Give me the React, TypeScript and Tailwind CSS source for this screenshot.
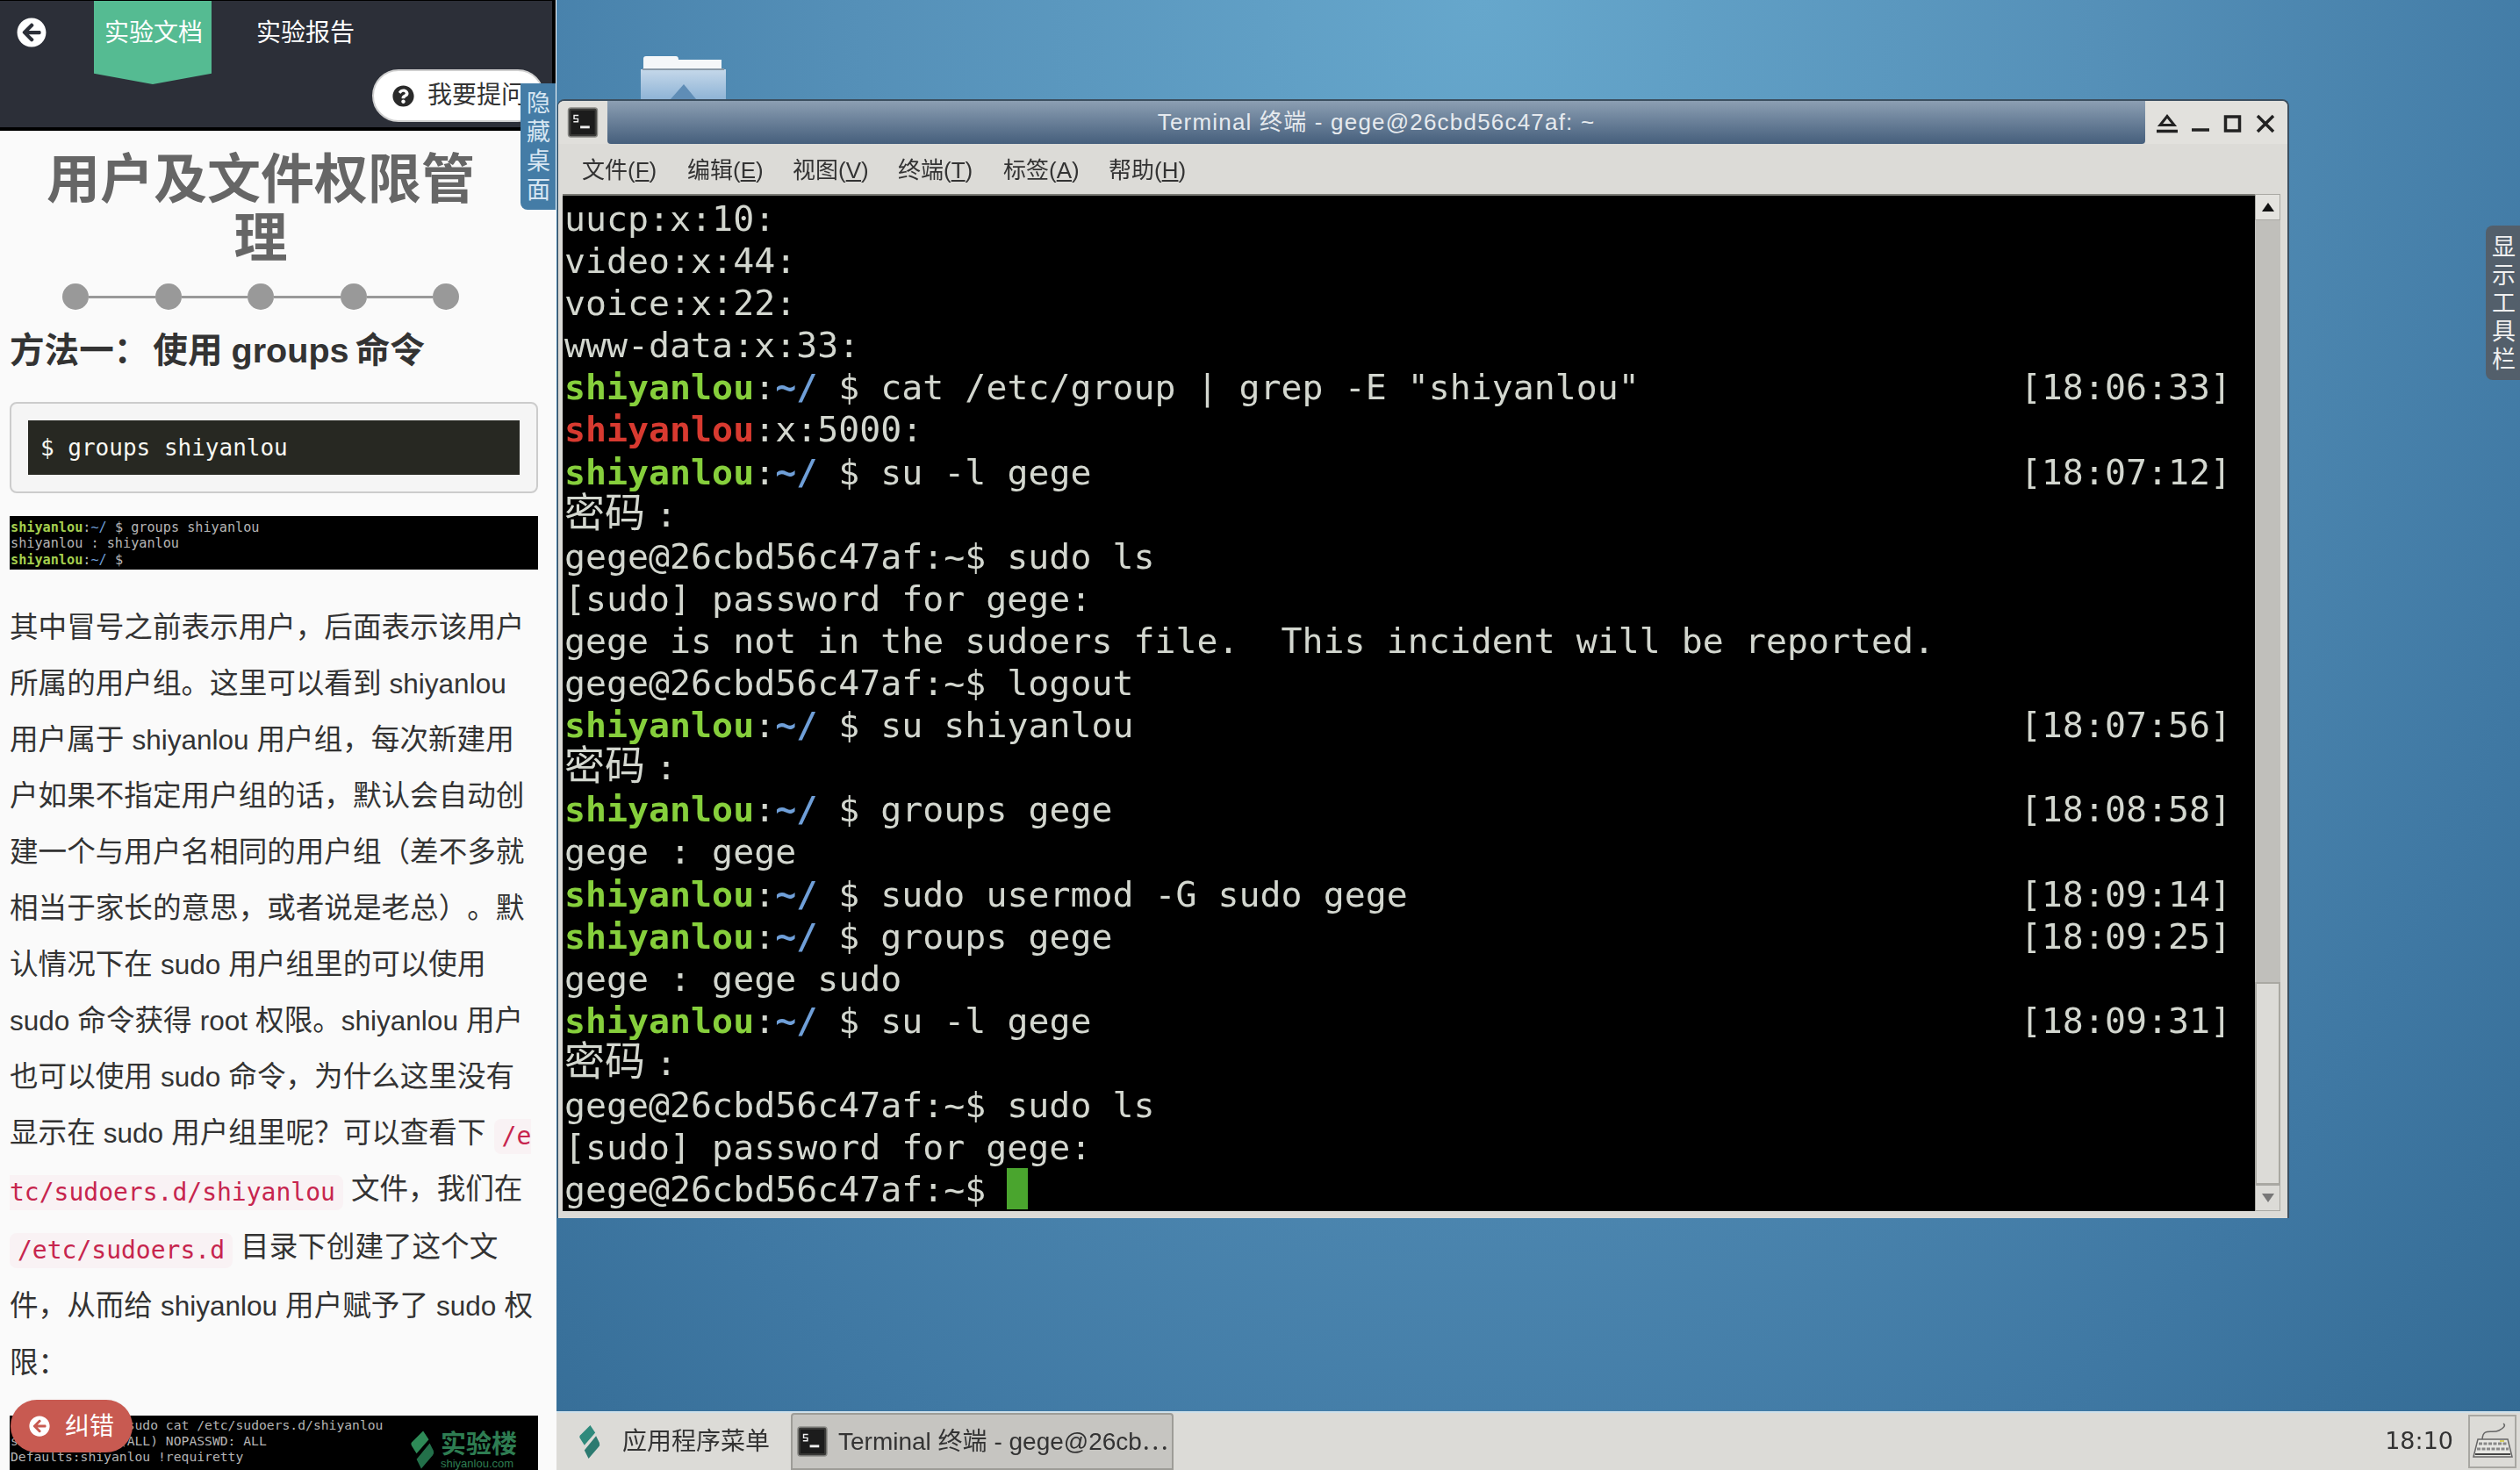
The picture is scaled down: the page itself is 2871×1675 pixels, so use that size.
import React from "react";
import { FaArrowCircleLeft, FaQuestionCircle } from "react-icons/fa";

const G = ({ children }: { children: React.ReactNode }) => <span className="font-bold text-[#86cf3c]">{children}</span>;

const Prompt = ({ cmd }: { cmd: string }) => (
  <>
    <G>shiyanlou</G>:<span className="font-bold text-[#6f9fd8]">~/</span> $ {cmd}
  </>
);

const Pw = () => (
  <>
    <span className="text-[46px] leading-[0]">密码</span>
    <span className="inline-block w-[48px] text-center leading-[0]">:</span>
  </>
);

const lines: { c: React.ReactNode; t?: string }[] = [
  { c: "uucp:x:10:" },
  { c: "video:x:44:" },
  { c: "voice:x:22:" },
  { c: "www-data:x:33:" },
  { c: <Prompt cmd={'cat /etc/group | grep -E "shiyanlou"'} />, t: "[18:06:33]" },
  { c: <><span className="font-bold text-[#d83a30]">shiyanlou</span>:x:5000:</> },
  { c: <Prompt cmd="su -l gege" />, t: "[18:07:12]" },
  { c: <Pw /> },
  { c: "gege@26cbd56c47af:~$ sudo ls" },
  { c: "[sudo] password for gege:" },
  { c: "gege is not in the sudoers file.  This incident will be reported." },
  { c: "gege@26cbd56c47af:~$ logout" },
  { c: <Prompt cmd="su shiyanlou" />, t: "[18:07:56]" },
  { c: <Pw /> },
  { c: <Prompt cmd="groups gege" />, t: "[18:08:58]" },
  { c: "gege : gege" },
  { c: <Prompt cmd="sudo usermod -G sudo gege" />, t: "[18:09:14]" },
  { c: <Prompt cmd="groups gege" />, t: "[18:09:25]" },
  { c: "gege : gege sudo" },
  { c: <Prompt cmd="su -l gege" />, t: "[18:09:31]" },
  { c: <Pw /> },
  { c: "gege@26cbd56c47af:~$ sudo ls" },
  { c: "[sudo] password for gege:" },
  {
    c: (
      <>
        gege@26cbd56c47af:~$ <span className="inline-block h-[47px] w-[24px] bg-[#4aa52e] align-top" />
      </>
    ),
  },
];

const En = ({ children }: { children: React.ReactNode }) => <span className="text-[31.500px]">{children}</span>;

const Code = ({ children, extra }: { children: React.ReactNode; extra?: string }) => (
  <code className={"inline-block h-[40px] bg-[#f9f2f4] font-['DejaVu_Sans_Mono',monospace] text-[28px] leading-[40px] text-[#c7254e] " + (extra || "")}>
    {children}
  </code>
);

const TermIcon = ({ className }: { className: string }) => (
  <svg viewBox="0 0 36 36" className={className}>
    <rect x="1" y="1" width="34" height="34" rx="3" fill="#3a3a38" stroke="#8a8a86" strokeWidth="1.5" />
    <rect x="4" y="4" width="28" height="28" fill="#1c1c1c" />
    <path d="M7 9h6v1.5H8.500V13H13v5H7v-1.500h4.500V14.500H7z" fill="#eeeeee" />
    <rect x="15" y="22" width="11" height="3" fill="#eeeeee" />
  </svg>
);

const Logo = ({ className, a, b }: { className: string; a: string; b: string }) => (
  <svg viewBox="0 0 28 40" className={className}>
    <path d="M15 0 L21 9 L8 24 L3 16 Q1 13 4 11 Z" fill={a} />
    <path d="M22 13 L26 21 Q27 24 25 26 L13 40 L8 30 Z" fill={b} />
  </svg>
);

const ShotLine = ({ children }: { children: React.ReactNode }) => <div className="h-[18.300px] whitespace-pre">{children}</div>;
const SG = ({ children }: { children: React.ReactNode }) => <span className="font-bold text-[#a5cf4e]">{children}</span>;

export default function App() {
  const cn = "font-['Liberation_Sans','Noto_Sans_CJK_SC',sans-serif]";
  return (
    <div className={"flex h-[1675px] w-[2871px] overflow-hidden " + cn}>
      {/* Course sidebar */}
      <aside className="relative h-full w-[634px] shrink-0 overflow-hidden bg-[#fafafa]">
        <header className="flex h-[149px] w-[633px] items-start overflow-hidden border-t-[1px] border-r-[4px] border-b-[4px] border-black bg-[#2c2f38]">
          <FaArrowCircleLeft className="mt-[19px] ml-[19px] h-[34px] w-[34px] shrink-0 text-white" />
          <div className="ml-[54px] h-[95px] w-[134px] shrink-0 bg-[#55bb92] pt-[17px] pl-[2px] text-center text-[28px] leading-[40px] text-white [clip-path:polygon(0_0,100%_0,100%_87%,50%_100%,0_87%)]">
            实验文档
          </div>
          <div className="ml-[51px] shrink-0 pt-[17px] text-[28px] leading-[40px] whitespace-nowrap text-white">实验报告</div>
          <div className="mt-[78px] ml-[20px] flex h-[60px] w-[196px] shrink-0 items-center overflow-hidden rounded-full border-2 border-[#cfcfcf] bg-white pl-[21px]">
            <FaQuestionCircle className="h-[25px] w-[25px] shrink-0 text-[#2a2a2a]" />
            <span className="ml-[15px] whitespace-nowrap text-[28px] text-[#333]">我要提问</span>
          </div>
        </header>

        <div className="absolute top-[95px] left-[593px] flex h-[144px] w-[40px] flex-col items-center rounded-bl-lg bg-[#447ca6] pt-[7px] pl-[1px] text-[27px] leading-[33px] text-[#d7e6f2]">
          <span>隐</span>
          <span>藏</span>
          <span>桌</span>
          <span>面</span>
        </div>

        <div className="px-[11px]">
          <h1 className="mt-[23px] w-[572px] text-center text-[61px] leading-[67px] font-bold text-[#666]">
            用户及文件权限管
            <br />理
          </h1>
          <div className="mt-[17px] ml-[60px] flex h-[30px] w-[452px] items-center">
            <i className="h-[30px] w-[30px] rounded-full bg-[#999]" />
            <i className="h-[3px] flex-1 bg-[#999]" />
            <i className="h-[30px] w-[30px] rounded-full bg-[#999]" />
            <i className="h-[3px] flex-1 bg-[#999]" />
            <i className="h-[30px] w-[30px] rounded-full bg-[#999]" />
            <i className="h-[3px] flex-1 bg-[#999]" />
            <i className="h-[30px] w-[30px] rounded-full bg-[#999]" />
            <i className="h-[3px] flex-1 bg-[#999]" />
            <i className="h-[30px] w-[30px] rounded-full bg-[#999]" />
          </div>
          <h2 className="mt-[21px] h-[50px] text-[39.600px] leading-[50px] font-bold whitespace-nowrap text-[#333]">
            方法一：<span className="ml-[5px]">使用</span> <span className="-ml-[1px]">groups</span> <span className="-ml-[4px]">命令</span>
          </h2>

          <div className="mt-[34px] h-[104px] w-[602px] rounded-lg border-2 border-[#cccccc] bg-[#f5f5f5] px-[19px] py-[19px]">
            <div className="h-[62px] bg-[#272822] pl-[14px] font-['DejaVu_Sans_Mono',monospace] text-[26px] leading-[62px] text-[#f8f8f2]">$ groups shiyanlou</div>
          </div>

          <div className="mt-[26px] h-[61px] w-[602px] overflow-hidden bg-black pt-[2px] pl-[1px] font-['DejaVu_Sans_Mono',monospace] text-[15.200px] text-[#b5b5b5]">
            <ShotLine>
              <SG>shiyanlou</SG>:<span className="text-[#6f9fd8]">~/</span> $ groups shiyanlou
            </ShotLine>
            <ShotLine>shiyanlou : shiyanlou</ShotLine>
            <ShotLine>
              <SG>shiyanlou</SG>:<span className="text-[#6f9fd8]">~/</span> $
            </ShotLine>
          </div>

          <div className="mt-[34px] whitespace-nowrap text-[32.600px] leading-[64px] text-[#333] [font-feature-settings:'chws'_0] [text-spacing-trim:space-all]">
            <div>其中冒号之前表示用户，后面表示该用户</div>
            <div>所属的用户组。这里可以看到 <En>shiyanlou</En></div>
            <div>用户属于 <En>shiyanlou</En> 用户组，每次新建用</div>
            <div>户如果不指定用户组的话，默认会自动创</div>
            <div>建一个与用户名相同的用户组（差不多就</div>
            <div>相当于家长的意思，或者说是老总）。默</div>
            <div>认情况下在 <En>sudo</En> 用户组里的可以使用</div>
            <div><En>sudo</En> 命令获得 <En>root</En> 权限。<En>shiyanlou</En> 用户</div>
            <div>也可以使用 <En>sudo</En> 命令，为什么这里没有</div>
            <div className="h-[64px]">
              显示在 <En>sudo</En> 用户组里呢？可以查看下 <Code extra="w-[42px] rounded-l-lg pl-[9px] align-[-2px]">/e</Code>
            </div>
            <div className="h-[66px]">
              <Code extra="rounded-r-lg pr-[9px] align-[-2px]">tc/sudoers.d/shiyanlou</Code> 文件，我们在
            </div>
            <div className="h-[67px]">
              <Code extra="rounded-lg px-[9px] align-[-2px]">/etc/sudoers.d</Code> 目录下创建了这个文
            </div>
            <div className="h-[65px]">件，从而给 <En>shiyanlou</En> 用户赋予了 <En>sudo</En> 权</div>
            <div>限：</div>
          </div>

          <div className="relative mt-[28px] h-[62px] w-[602px] overflow-hidden bg-black pl-[1px] font-['DejaVu_Sans_Mono',monospace] text-[14.700px] leading-[18px] whitespace-pre text-[#b5b5b5]">
            <div className="pt-[2px]">
              <SG>shiyanlou</SG>:<span className="text-[#6f9fd8]">~/</span> $ sudo cat /etc/sudoers.d/shiyanlou
            </div>
            <div>shiyanlou ALL=(ALL) NOPASSWD: ALL</div>
            <div>Defaults:shiyanlou !requiretty</div>
            <div className="absolute top-[17px] left-[455px] flex items-start">
              <Logo className="h-[44px] w-[30px]" a="#2e8b57" b="#23704a" />
              <div className={"ml-[6px] " + cn}>
                <div className="text-[29px] leading-[32px] font-bold text-[#2e7d52]">实验楼</div>
                <div className="text-[13px] leading-[12px] text-[#2e7d52]">shiyanlou.com</div>
              </div>
            </div>
          </div>
        </div>

        <div className="absolute top-[1595px] left-[12px] flex h-[60px] w-[139px] items-center rounded-full bg-[#c85a51] pl-[21px] text-[28px] text-white shadow-sm">
          <FaArrowCircleLeft className="h-[24px] w-[24px]" />
          <span className="ml-[17px] pt-[2px]">纠错</span>
        </div>
      </aside>

      {/* Remote desktop */}
      <main className="relative flex h-full flex-1 flex-col overflow-hidden bg-[radial-gradient(ellipse_at_47%_0%,#66a7cc_0%,#5590b8_42%,#3f78a3_78%,#336a93_100%)]">
        <svg viewBox="0 0 97 49" className="absolute top-[64px] left-[96px] h-[49px] w-[97px]">
          <defs>
            <linearGradient id="fold" x1="0" y1="0" x2="0" y2="1">
              <stop offset="0" stopColor="#c5d8ea" />
              <stop offset="1" stopColor="#8fb4d6" />
            </linearGradient>
          </defs>
          <path d="M3 10 V3 Q3 0 6 0 H40 Q43 0 43 4 H92 V16 H3 Z" fill="#f5f7f9" />
          <rect x="0" y="15" width="97" height="34" fill="url(#fold)" />
          <rect x="2" y="14" width="93" height="2" fill="#8b9aa8" />
          <path d="M34 49 L49 32 L63 49 Z" fill="#5f8db6" />
        </svg>

        <div className="absolute top-[113px] left-[1px] flex h-[1275px] w-[1973px] flex-col overflow-hidden rounded-t-lg border-t-2 border-r-2 border-l border-[#3c4f60] bg-[#dcdbd7] blur-[0.6px]">
          <div className="flex h-[49px] shrink-0">
            <div className="flex w-[56px] items-center justify-center bg-[#e0dfdb]">
              <TermIcon className="h-[35px] w-[36px]" />
            </div>
            <div className="flex flex-1 items-center justify-center rounded-b-sm bg-gradient-to-b from-[#8c9fb3] to-[#465f7c] text-[26px] tracking-[1.200px] text-[#e6eaee]">
              Terminal 终端 - gege@26cbd56c47af: ~
            </div>
            <div className="flex w-[162px] items-center bg-[#e2e1dd]">
              <svg viewBox="0 0 162 30" className="h-[30px] w-[162px]" fill="none" stroke="#222" strokeWidth="3.500">
                <path d="M25 7.500 L33 17.500 H17 Z" strokeWidth="3" />
                <path d="M13 24.500 H37" />
                <path d="M53 23 H73" />
                <rect x="91.500" y="8" width="16" height="16" />
                <path d="M128 7 L146 25 M146 7 L128 25" />
              </svg>
            </div>
          </div>

          <nav className="flex h-[57px] shrink-0 items-center pt-[3px] pl-[27px] text-[26px] text-[#333]">
            <span className="w-[120px]">文件(<u>F</u>)</span>
            <span className="w-[120px]">编辑(<u>E</u>)</span>
            <span className="w-[120px]">视图(<u>V</u>)</span>
            <span className="w-[120px]">终端(<u>T</u>)</span>
            <span className="w-[120px]">标签(<u>A</u>)</span>
            <span className="w-[120px]">帮助(<u>H</u>)</span>
          </nav>

          <div className="flex min-h-0 flex-1 pr-[8px] pb-[8px] pl-[5px]">
            <div className="flex-1 overflow-hidden border-t-2 border-[#7a7a74] bg-black pt-[2px] pl-[2px] font-['DejaVu_Sans_Mono','Noto_Sans_CJK_SC',monospace] text-[39.900px] leading-[48.100px] text-[#d3d7cf]">
              {lines.map((l, i) => (
                <div key={i} className="flex h-[48.100px] w-[1899px] justify-between whitespace-pre">
                  <span>{l.c}</span>
                  {l.t && <span>{l.t}</span>}
                </div>
              ))}
            </div>
            <div className="flex w-[29px] flex-col bg-[#c0bfbb]">
              <div className="flex h-[30px] items-center justify-center border border-[#aaa9a4] bg-[#e4e3df]">
                <svg viewBox="0 0 14 10" className="h-[10px] w-[14px]"><path d="M7 0 L14 10 H0 Z" fill="#111" /></svg>
              </div>
              <div className="flex-1" />
              <div className="h-[231px] border-2 border-[#a9a8a2] bg-[#dcdbd7]" />
              <div className="flex h-[30px] items-center justify-center border border-[#aaa9a4] bg-[#dcdbd7]">
                <svg viewBox="0 0 14 10" className="h-[10px] w-[14px]"><path d="M0 0 H14 L7 10 Z" fill="#777" /></svg>
              </div>
            </div>
          </div>
        </div>

        <div className="absolute top-[257px] right-0 flex h-[176px] w-[39px] flex-col items-center rounded-l-lg bg-[#535f6b] pt-[9px] pl-[2px] text-[27px] leading-[32px] text-[#f0f0f0]">
          <span>显</span>
          <span>示</span>
          <span>工</span>
          <span>具</span>
          <span>栏</span>
        </div>

        <footer className="mt-auto flex h-[67px] items-center border-t-2 border-[#cfe0ea] bg-[#dcdbd7] text-[28px] text-[#333] blur-[0.5px]">
          <Logo className="ml-[24px] h-[38px] w-[27px]" a="#2f8a7c" b="#2c7a70" />
          <span className="ml-[24px]">应用程序菜单</span>
          <div className="ml-[24px] flex h-[65px] w-[436px] items-center self-end rounded-t-sm border-2 border-[#9d9c97] bg-[#c6c5c1] pl-[5px]">
            <TermIcon className="h-[35px] w-[35px]" />
            <span className="ml-[12px] whitespace-nowrap">Terminal 终端 - gege@26cb⋯</span>
          </div>
          <span className="mr-[17px] ml-auto font-['DejaVu_Sans',sans-serif] text-[27px]">18:10</span>
          <div className="mr-[4px] flex h-[61px] w-[55px] items-center justify-center border-2 border-[#a8a7a2]">
            <svg viewBox="0 0 50 50" className="h-[50px] w-[50px]" fill="none">
              <path d="M13 22 C14 8 24 16 32 12 C38 9 40 6 37 4" stroke="#666" strokeWidth="1.500" />
              <path d="M8 22 H42 L47 42 H3 Z" fill="#e8e8e4" stroke="#666" strokeWidth="1.500" />
              <path d="M9 27 H41 M7 33 H43" stroke="#888" strokeWidth="3" strokeDasharray="4 1.500" />
              <path d="M5 39 H45" stroke="#444" strokeWidth="2" />
              <rect x="33" y="23" width="5" height="2" fill="#d8d060" />
            </svg>
          </div>
        </footer>
      </main>
    </div>
  );
}
